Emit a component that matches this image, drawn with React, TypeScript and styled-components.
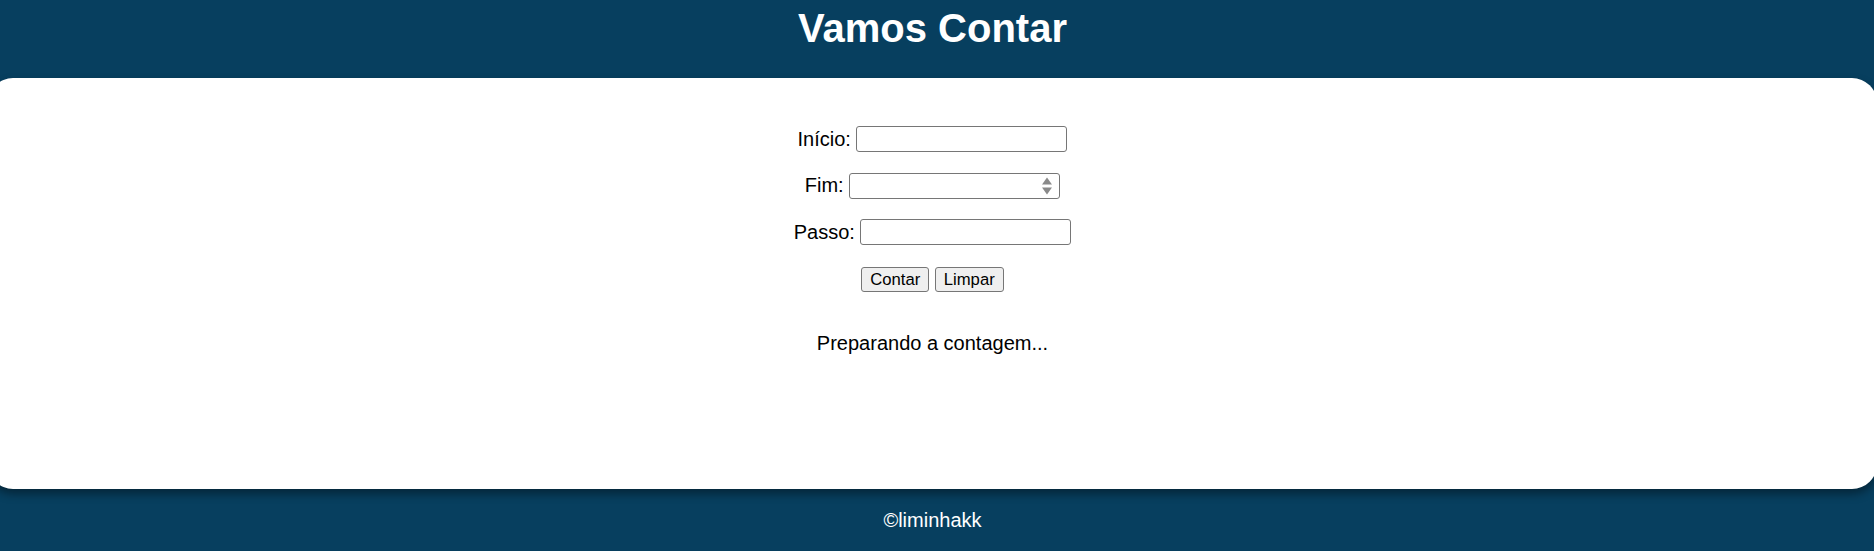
import React from "react";
import styled, { createGlobalStyle } from "styled-components";

const GlobalStyle = createGlobalStyle`
  html, body {
    margin: 0;
    padding: 0;
    background: #073f5f;
    font-family: "Liberation Sans", Arial, sans-serif;
    overflow: hidden;
  }
`;

const Header = styled.header`
  height: 78px;
  box-sizing: border-box;
  padding: 5px 9px 0 0;
`;

const Title = styled.h1`
  margin: 0;
  font-size: 40px;
  line-height: 46px;
  font-weight: bold;
  color: #ffffff;
  text-align: center;
`;

const Section = styled.main`
  height: 411px;
  box-sizing: border-box;
  margin: 0 -3px 0 -12px;
  padding-top: 48px;
  background: #ffffff;
  border-radius: 25px;
  box-shadow: 0 5px 10px rgba(0, 0, 0, 0.4);
  display: flex;
  flex-direction: column;
  align-items: center;
  color: #000000;
`;

const FieldRow = styled.div<{ $gapTop?: number }>`
  display: flex;
  align-items: center;
  height: 26px;
  margin-top: ${(p) => p.$gapTop ?? 0}px;
`;

const Label = styled.label`
  font-size: 20px;
  line-height: 23px;
  margin-right: 5.5px;
`;

const InputWrap = styled.span`
  position: relative;
  display: inline-flex;
`;

const TextInput = styled.input`
  width: 211px;
  height: 26px;
  box-sizing: border-box;
  border: 1px solid #767676;
  border-radius: 3px;
  padding: 1px 3px;
  font-family: "Liberation Sans", Arial, sans-serif;
  font-size: 16.67px;
  background: #ffffff;
  outline: none;
  &::-webkit-inner-spin-button,
  &::-webkit-outer-spin-button {
    -webkit-appearance: none;
    margin: 0;
  }
  -moz-appearance: textfield;
`;

const Spinner = styled.svg`
  position: absolute;
  right: 7px;
  top: 2px;
  width: 12px;
  height: 22px;
  pointer-events: none;
`;

const ButtonRow = styled.div`
  display: flex;
  gap: 5.5px;
  margin-top: 21.5px;
`;

const Button = styled.button`
  height: 25px;
  box-sizing: border-box;
  padding: 0 8px;
  border: 1px solid #767676;
  border-radius: 3px;
  background: #efefef;
  color: #000000;
  font-family: "Liberation Sans", Arial, sans-serif;
  font-size: 16.67px;
  line-height: 21px;
`;

const Output = styled.div`
  margin-top: 40px;
  font-size: 20px;
  line-height: 23px;
`;

const Footer = styled.footer`
  height: 62px;
  box-sizing: border-box;
  padding: 20px 9px 0 0;
  text-align: center;
  color: #ffffff;
  font-size: 20px;
  line-height: 23px;
`;

export default function App() {
  return (
    <>
      <GlobalStyle />
      <Header>
        <Title>Vamos Contar</Title>
      </Header>
      <Section>
        <FieldRow>
          <Label htmlFor="inicio">Início:</Label>
          <TextInput id="inicio" type="text" />
        </FieldRow>
        <FieldRow $gapTop={20.5}>
          <Label htmlFor="fim">Fim:</Label>
          <InputWrap>
            <TextInput id="fim" type="number" />
            <Spinner viewBox="0 0 12 22">
              <polygon points="6,2.5 11,9.5 1,9.5" fill="#8a8a8a" />
              <polygon points="1,12.5 11,12.5 6,19.5" fill="#8a8a8a" />
            </Spinner>
          </InputWrap>
        </FieldRow>
        <FieldRow $gapTop={20.5}>
          <Label htmlFor="passo">Passo:</Label>
          <TextInput id="passo" type="text" />
        </FieldRow>
        <ButtonRow>
          <Button type="button">Contar</Button>
          <Button type="button">Limpar</Button>
        </ButtonRow>
        <Output>Preparando a contagem...</Output>
      </Section>
      <Footer>©liminhakk</Footer>
    </>
  );
}
